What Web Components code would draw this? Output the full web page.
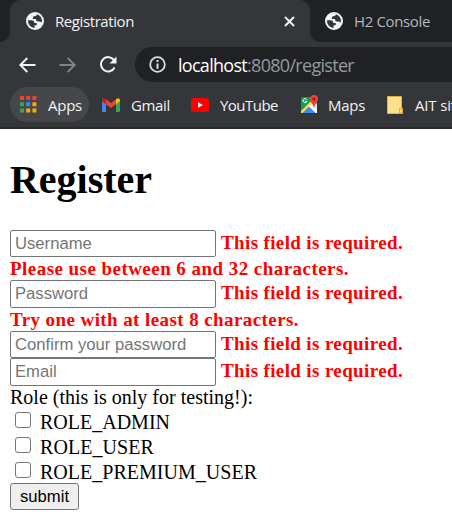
<!DOCTYPE html>
<html lang="en">
<head>
<meta charset="utf-8">
<title>Registration</title>
<style>
html,body{margin:0;background:#fff}
body{width:452px;height:518px;overflow:hidden}
</style>
</head>
<body>
<browser-window></browser-window>
<script>
const define=(name,markup,ready)=>customElements.define(name,class extends HTMLElement{
  connectedCallback(){
    if(this.shadowRoot)return;
    this.attachShadow({mode:'open'}).innerHTML=markup;
    if(ready)ready(this,this.shadowRoot);
  }
});

// A one-line label whose letter spacing is adjusted to fill the given width.
define('fit-label',`<style>:host{display:block;white-space:nowrap;flex:none}span{display:inline-block}</style><span></span>`,(h,r)=>{
  const s=r.querySelector('span'),t=h.getAttribute('text'),w=+h.getAttribute('w');
  s.textContent=t;
  if(w){s.style.letterSpacing=((w-s.getBoundingClientRect().width)/t.length)+'px';h.style.width=w+'px';}
});

const icons={
globe:[18,18,'<circle cx="9" cy="9" r="9" fill="#f1f3f4"/><path fill="#35363a" d="M2 8.2h3.600c1.500 0 2.600.9 2.600 2.200v.6h2.500v2.200H8.600v2.700A7 7 0 0 1 2 8.200ZM10.900 2.300c2.900.8 5.100 3.500 5.100 6.700 0 .5-.1 1-.2 1.500-.9-.7-1.700-1-2.900-1-1.900 0-2.900-.9-2.900-2.100V7.100H6.700c0-2 .8-2.900 2.500-3 .9 0 1.500-.7 1.700-1.800Z"/>'],
close:[11,11,'<path d="M1 1l9 9M10 1l-9 9" stroke="#f1f3f4" stroke-width="2"/>'],
back:[17,16,'<path d="M16.500 8H1.500M8.300 1L1.300 8l7 7" fill="none" stroke="#f1f3f4" stroke-width="1.900"/>'],
forward:[17,16,'<path d="M.5 8h15M8.700 1l7 7-7 7" fill="none" stroke="#808286" stroke-width="1.900"/>'],
reload:[18,17,'<path d="M15.300 4.500A7.200 7.200 0 1 0 15.600 11.500" fill="none" stroke="#f1f3f4" stroke-width="2"/><path d="M17.500 .5v7h-7Z" fill="#f1f3f4"/>'],
info:[17,17,'<circle cx="8.500" cy="8.500" r="7.300" fill="none" stroke="#dadce0" stroke-width="1.800"/><path d="M8.500 4v2.100M8.500 7.500v5.300" stroke="#dadce0" stroke-width="2"/>'],
apps:[17,17,'<path fill="#ea4335" d="M0 0h4v4H0zM6.200 0h4v4h-4zM12.400 0h4v4h-4z"/><path fill="#34a853" d="M0 6.200h4v4H0zM0 12.400h4v4H0z"/><path fill="#2196f3" d="M6.200 6.200h4v4h-4z"/><path fill="#f9ab00" d="M12.400 6.200h4v4h-4zM6.200 12.400h4v4h-4zM12.400 12.400h4v4h-4z"/>'],
gmail:[18,14,'<path fill="#4285f4" d="M0 3l4 3v8H1.200Q0 14 0 12.800Z"/><path fill="#34a853" d="M14 6l4-3v9.800Q18 14 16.800 14H14Z"/><path fill="#ea4335" d="M4 1.200l5 3.800 5-3.800V6.200L9 10 4 6.200Z"/><path fill="#c5221f" d="M0 2.200C0 .2 2 -.4 3.300.7L4 1.200v5L0 3.200Z"/><path fill="#fbbc04" d="M18 2.200c0-2-2-2.600-3.300-1.500l-.7.5v5l4-3Z"/>'],
youtube:[18,14,'<rect width="18" height="14" rx="3" fill="#f00"/><path d="M7 4.200v5.600L11.800 7Z" fill="#fff"/>'],
maps:[19,19,'<rect x="1" y="2" width="16" height="16" rx="1.500" fill="#0f9d58"/><path d="M2 18L14 6l3 3v9Z" fill="#e8eaed"/><path d="M1 16L13.500 3.500l2 2L2.500 18H1Z" fill="#ffd54f"/><path d="M2.500 18L9 11.500l7 6.500Z" fill="#4285f4"/><path d="M9 11.500l2.500-2.500 5.500 6v3h-1Z" fill="#fff"/><path d="M6.700 4.600A2 2 0 1 0 7 6.300H5.200" fill="none" stroke="#fff" stroke-width="1"/><path d="M14 0a4 4 0 0 1 4 4c0 3-3.200 4.500-3.700 8.500h-.6C13.200 8.500 10 7 10 4a4 4 0 0 1 4-4Z" fill="#ea4335"/><circle cx="14" cy="4" r="1.500" fill="#8c1c13"/>'],
folder:[16,18,'<path d="M.5.500h14v11.500h1v5.500H.5Z" fill="#ffe08a" stroke="#dcb43c"/><path d="M12.500 17v-4.500h2.500V17Z" fill="#ffe08a" stroke="#d9ae35"/>']
};
define('app-icon',`<style>:host{display:block;flex:none}svg{display:block}</style>`,(h,r)=>{
  const [w,t,p]=icons[h.getAttribute('name')];
  r.innerHTML+=`<svg width="${w}" height="${t}" viewBox="0 0 ${w} ${t}">${p}</svg>`;
});

define('tab-strip',`<style>
:host{display:grid;grid-template-columns:10px 300px 1fr;height:42px;background:#35363a;color:#f1f3f4;font:15px/20px "Open Sans",sans-serif}
.left{background:#202124;border-bottom-right-radius:10px}
.cell{background:#202124;display:flex}
.active{width:300px;box-sizing:border-box;background:#35363a;border-radius:10px 10px 0 0;display:flex;align-items:center;padding:0 15px 0 16px;gap:11px}
.x{margin-left:auto}
.next{background:#202124;border-bottom-left-radius:10px;display:flex;align-items:center;padding-left:15px;gap:11px;color:#b5b8bd}
</style>
<div class="left"></div>
<div class="cell"><div class="active"><app-icon name="globe"></app-icon><fit-label text="Registration" w="79"></fit-label><app-icon class="x" name="close"></app-icon></div></div>
<div class="next"><app-icon name="globe"></app-icon><fit-label text="H2 Console" w="76"></fit-label></div>`);

define('tool-bar',`<style>
:host{display:flex;align-items:center;height:45px;background:#35363a;padding-left:19px;font:18px/24px "Open Sans",sans-serif;box-sizing:border-box}
.f{margin-left:23px}.r{margin-left:23px}
.address{flex:1;margin-left:18px;height:35px;border-radius:18px 0 0 18px;background:#202124;display:flex;align-items:center;padding-left:14px}
.host{margin-left:12px;color:#fff}.path{color:#969a9f}
</style>
<app-icon name="back"></app-icon><app-icon class="f" name="forward"></app-icon><app-icon class="r" name="reload"></app-icon>
<div class="address"><app-icon name="info"></app-icon><fit-label class="host" text="localhost" w="69"></fit-label><fit-label class="path" text=":8080/register" w="107"></fit-label></div>`);

customElements.define('bookmark-link',class extends HTMLElement{
  connectedCallback(){
    const g=n=>this.getAttribute(n);
    this.attachShadow({mode:'open'}).innerHTML=`<style>:host{display:flex;align-items:center;flex:none;color:#f1f3f4;gap:${g('gap')}px}</style><app-icon name="${g('icon')}"></app-icon><fit-label text="${g('text')}" w="${g('w')}"></fit-label>`;
  }
});
define('bookmark-bar',`<style>
:host{display:flex;align-items:center;height:42px;box-sizing:border-box;padding:0 0 5px 10px;background:#35363a;border-bottom:2px solid #292a2d;overflow:hidden;font:15px/20px "Open Sans",sans-serif}
.apps{height:35px;width:79px;box-sizing:border-box;border-radius:18px;background:#46474b;padding-left:10px}
</style>
<bookmark-link class="apps" icon="apps" text="Apps" w="34" gap="11"></bookmark-link>
<bookmark-link style="margin-left:13px" icon="gmail" text="Gmail" w="39" gap="11"></bookmark-link>
<bookmark-link style="margin-left:21px" icon="youtube" text="YouTube" w="58" gap="11"></bookmark-link>
<bookmark-link style="margin-left:22px" icon="maps" text="Maps" w="37" gap="9"></bookmark-link>
<bookmark-link style="margin-left:22px" icon="folder" text="AIT sit" w="41" gap="12"></bookmark-link>`);

define('form-field',`<style>
:host{display:flex;gap:5px;height:27px;color:#f00;font-weight:bold}
input{box-sizing:border-box;width:206px;height:var(--box,27px);flex:none;margin:0;border:1.500px solid #767676;border-radius:2px;padding:0 4px;font:16.670px/22px "Liberation Sans",Arial,sans-serif;background:#fff}
input::placeholder{color:#757575;opacity:1}
fit-label{font-size:19px;line-height:26px}
</style><input><fit-label text="This field is required." w="182"></fit-label>`,(h,r)=>{r.querySelector('input').placeholder=h.getAttribute('label')});
define('role-option',`<style>
:host{display:flex;height:25px;padding-left:5px;gap:9px}
input{appearance:none;box-sizing:border-box;width:16px;height:16px;margin:1px 0 0;border:1px solid #767676;border-radius:3px;background:#fff;flex:none}
fit-label{line-height:22px}
</style><input type="checkbox"><fit-label></fit-label>`,(h,r)=>{
  const l=document.createElement('fit-label');l.setAttribute('text',h.getAttribute('label'));l.setAttribute('w',h.getAttribute('w'));
  r.querySelector('fit-label').replaceWith(l);
});
define('register-page',`<style>
:host{display:flex;flex-direction:column;align-items:flex-start;padding:0 10px;background:#fff;color:#000;font:20px/23px "Liberation Serif","Times New Roman",serif}
h1{margin:27px 0 26px;font-size:40px;line-height:48px}
.error{color:#f00;font-weight:bold;font-size:19px;line-height:24px}
.tall{height:28px;--box:28px}
button{box-sizing:border-box;width:69px;height:27px;margin:-3px 0 0;padding:0;border:1px solid #767676;border-radius:3px;background:#efefef;color:#000;font:16.670px/23px "Liberation Sans",Arial,sans-serif}
</style>
<h1><fit-label text="Register" w="142"></fit-label></h1>
<form-field label="Username"></form-field>
<fit-label class="error" style="height:23px" text="Please use between 6 and 32 characters." w="339"></fit-label>
<form-field class="tall" label="Password"></form-field>
<fit-label class="error" style="height:23px" text="Try one with at least 8 characters." w="289"></fit-label>
<form-field label="Confirm your password"></form-field>
<form-field class="tall" label="Email"></form-field>
<fit-label style="height:25px" text="Role (this is only for testing!):" w="243"></fit-label>
<role-option label="ROLE_ADMIN" w="130"></role-option>
<role-option label="ROLE_USER" w="114"></role-option>
<role-option label="ROLE_PREMIUM_USER" w="217"></role-option>
<button>submit</button>`);
define('browser-window',`<style>:host{display:block;width:452px;height:518px;overflow:hidden}</style><tab-strip></tab-strip><tool-bar></tool-bar><bookmark-bar></bookmark-bar><register-page></register-page>`);
</script>
</body>
</html>
